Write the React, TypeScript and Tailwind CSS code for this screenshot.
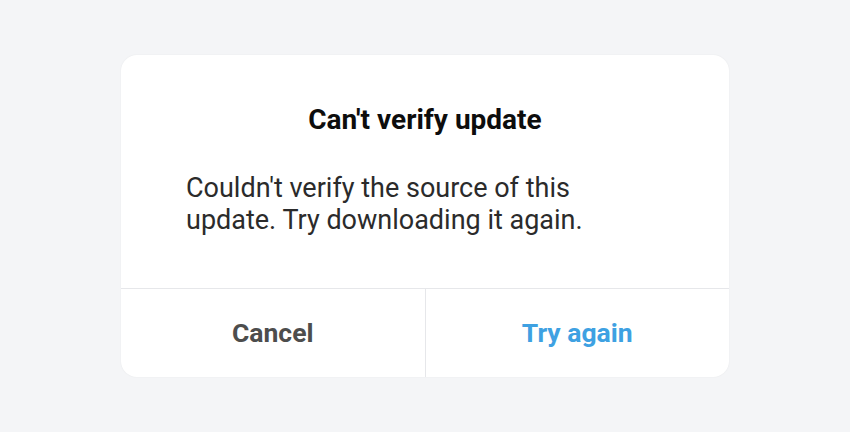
export default function App() {
  return (
    <div className="w-[850px] h-[432px] bg-[#f4f5f7] flex items-start justify-center pt-[55px] font-['Roboto',sans-serif]">
      <div className="w-[608px] h-[322px] bg-white rounded-[16px] shadow-[0_0_2px_rgba(0,0,0,0.06)] flex flex-col overflow-hidden">
        <div className="h-[233px] pt-[49px] px-[65px] flex flex-col">
          <h1 className="text-center text-[28px] leading-[32px] font-bold text-[#0d0d0d]">
            Can't verify update
          </h1>
          <p className="mt-[36px] text-[27px] leading-[32px] text-[#2b2b2b] whitespace-nowrap">
            Couldn't verify the source of this
            <br />
            update. Try downloading it again.
          </p>
        </div>
        <div className="flex-1 flex border-t border-[#e6e7ea]">
          <button className="flex-1 flex items-center justify-center text-[26.5px] font-bold text-[#4d4d4d] border-r border-[#e6e7ea]">
            Cancel
          </button>
          <button className="flex-1 flex items-center justify-center text-[26.5px] font-bold text-[#3ea1e2]">
            Try again
          </button>
        </div>
      </div>
    </div>
  );
}
